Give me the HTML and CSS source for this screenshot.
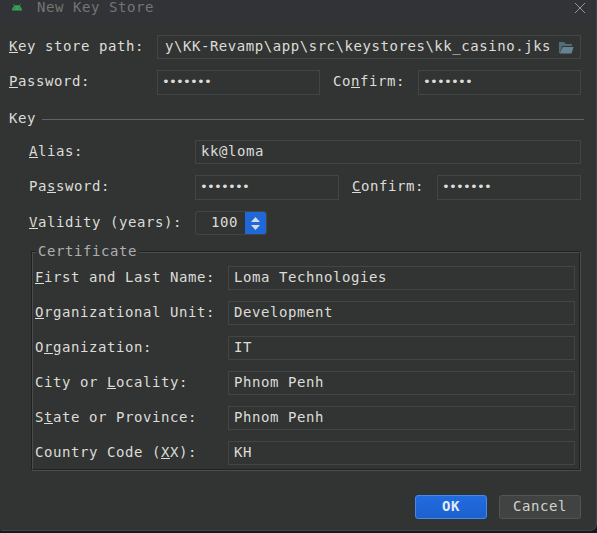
FILE: index.html
```html
<!DOCTYPE html>
<html lang="en">
<head>
<meta charset="utf-8">
<title>New Key Store</title>
<link rel="stylesheet" href="styles.css">
</head>
<body>
<main class="dialog">
  <header class="titlebar">
    <svg class="android" width="10" height="7" viewBox="0 0 10 7"><path d="M0 6.5C0 4.6 1 3 2.3 2L1 .3l.5-.3L3 1.6a5.500 5.500 0 0 1 4 0L8.500 0l.5.3L7.700 2C9 3 10 4.600 10 6.500z" fill="#37a355"/><path d="M2.300 3.500h1v1h-1zM6.700 3.500h1v1h-1z" fill="#24583a"/></svg>
    <span class="title">New Key Store</span>
    <svg class="close" width="12" height="12" viewBox="0 0 12 12"><path d="M1 1l10 10M11 1L1 11" stroke="#929393" fill="none"/></svg>
  </header>
  <div class="row store">
    <label><u>K</u>ey store path:</label>
    <div class="field grow path"><span>y\KK-Revamp\app\src\keystores\kk_casino.jks</span>
      <svg class="folder" width="15" height="12" viewBox="0 0 15 12"><path d="M0 11V0h5l2 2h6v2H3.200L.8 11z" fill="#526d7a"/><path d="M3.800 5H14.600L12.500 11.500H.7z" fill="#668391"/></svg>
    </div>
  </div>
  <div class="row tall store">
    <label><u>P</u>assword:</label>
    <div class="field grow dots">•••••••</div>
    <label class="confirm">Co<u>n</u>firm:</label>
    <div class="field grow dots">•••••••</div>
  </div>
  <div class="section"><span>Key</span><i></i></div>
  <section class="key">
    <div class="row">
      <label><u>A</u>lias:</label>
      <div class="field grow">kk@loma</div>
    </div>
    <div class="row tall">
      <label>Pa<u>s</u>sword:</label>
      <div class="field grow dots">•••••••</div>
      <label class="confirm"><u>C</u>onfirm:</label>
      <div class="field grow dots">•••••••</div>
    </div>
    <div class="row">
      <label><u>V</u>alidity (years):</label>
      <div class="spinner"><span>100</span>
        <div class="arrows"><svg width="9" height="13" viewBox="0 0 9 13"><path d="M0 5L4.500 0 9 5zM0 8h9L4.500 13z" fill="#d3dbe5"/></svg></div>
      </div>
    </div>
  </section>
  <section class="certificate">
    <h2>Certificate</h2>
    <div class="inner">
      <div class="row"><label><u>F</u>irst and Last Name:</label><div class="field grow">Loma Technologies</div></div>
      <div class="row"><label><u>O</u>rganizational Unit:</label><div class="field grow">Development</div></div>
      <div class="row"><label>O<u>r</u>ganization:</label><div class="field grow">IT</div></div>
      <div class="row"><label>City or <u>L</u>ocality:</label><div class="field grow">Phnom Penh</div></div>
      <div class="row"><label>S<u>t</u>ate or Province:</label><div class="field grow">Phnom Penh</div></div>
      <div class="row"><label>Country Code (<u>X</u>X):</label><div class="field grow">KH</div></div>
    </div>
  </section>
  <footer class="actions">
    <button class="ok">OK</button>
    <button>Cancel</button>
  </footer>
</main>
</body>
</html>
```
FILE: styles.css
```css
* { box-sizing: border-box; }
body {
  margin: 0;
  height: 533px;
  overflow: hidden;
  background: #18191a;
  color: #dcdcd8;
  font: 14px/20px "DejaVu Sans Mono", monospace;
  letter-spacing: 0.57px;
  white-space: nowrap;
}
.dialog {
  width: 597px;
  height: 531px;
  background: #323433;
  border: solid #434445;
  border-width: 0 1px 1px 0;
  border-radius: 0 0 7px 2px;
}
.titlebar {
  display: flex;
  height: 23px;
  padding: 0 10px 0 12px;
  background: #323336;
  color: #747575;
}
.android { margin-top: 4px; }
.title { margin: -3px auto 0 15px; }
.close { margin-top: 2px; }
.row { display: flex; height: 24px; line-height: 22px; }
.row.tall { height: 25px; }
label { flex: none; }
u { text-decoration: underline 1px; text-underline-offset: 1px; text-decoration-skip-ink: none; }
.field {
  height: 100%;
  padding-left: 5px;
  border: 1px solid #434544;
  line-height: 20px;
}
.grow { flex: 1 1 0; min-width: 0; }
.store { margin: 12px 15px 11px 9px; }
.store + .store { margin-top: 0; }
.store > label:first-child { width: 148px; }
.path { display: flex; padding-left: 7px; letter-spacing: 0.55px; }
.folder { margin: 6px 0 0 8px; flex: none; }
.dots { padding-left: 4px; font-size: 13px; letter-spacing: -0.83px; line-height: 22px; }
.row .confirm { width: 98px; padding-left: 13px; }
.section { display: flex; align-items: center; height: 22px; margin: 12px 12px 0 9px; }
.section i { flex: 1; height: 1px; margin: 2px 0 0 6px; background: #626464; }
.key { display: grid; gap: 11px; margin: 11px 15px 0 29px; }
.key label:first-child { width: 166px; }
.spinner {
  display: flex;
  width: 72px;
  border: 1px solid #434544;
  border-radius: 3px;
  line-height: 21px;
}
.spinner span { width: 49px; padding-left: 15px; }
.arrows {
  display: grid;
  place-items: center;
  flex: 1;
  background: #2068d8;
  border-radius: 0 2px 2px 0;
}
.certificate {
  height: 220px;
  margin: 16px 15px 0 31px;
  border: 1px solid #202222;
  border-right-color: #4c4e4d;
  border-bottom-color: #4c4e4d;
}
.inner {
  display: grid;
  align-content: start;
  gap: 11px;
  height: 218px;
  padding: 13px 4px 0 2px;
  border: 1px solid #4c4e4d;
  border-right-color: #202222;
  border-bottom-color: #202222;
}
.certificate h2 {
  position: relative;
  width: 103px;
  height: 20px;
  margin: -11px 0 -9px 4px;
  padding-left: 2px;
  background: #323433;
  color: #adafaf;
  font: inherit;
}
.inner label { width: 193px; }
.actions { display: flex; justify-content: flex-end; gap: 12px; margin: 24px 15px 0 0; }
button {
  width: 82px;
  height: 24px;
  padding: 0 0 2px;
  border: 1px solid #535555;
  border-radius: 3px;
  background: #414342;
  color: #d1d2ce;
  font: inherit;
  letter-spacing: inherit;
  line-height: 20px;
}
.ok {
  width: 72px;
  border-color: #438be8;
  background: linear-gradient(#226ce0, #1c61cd);
  color: #e2ebf5;
  font-weight: bold;
}
```
